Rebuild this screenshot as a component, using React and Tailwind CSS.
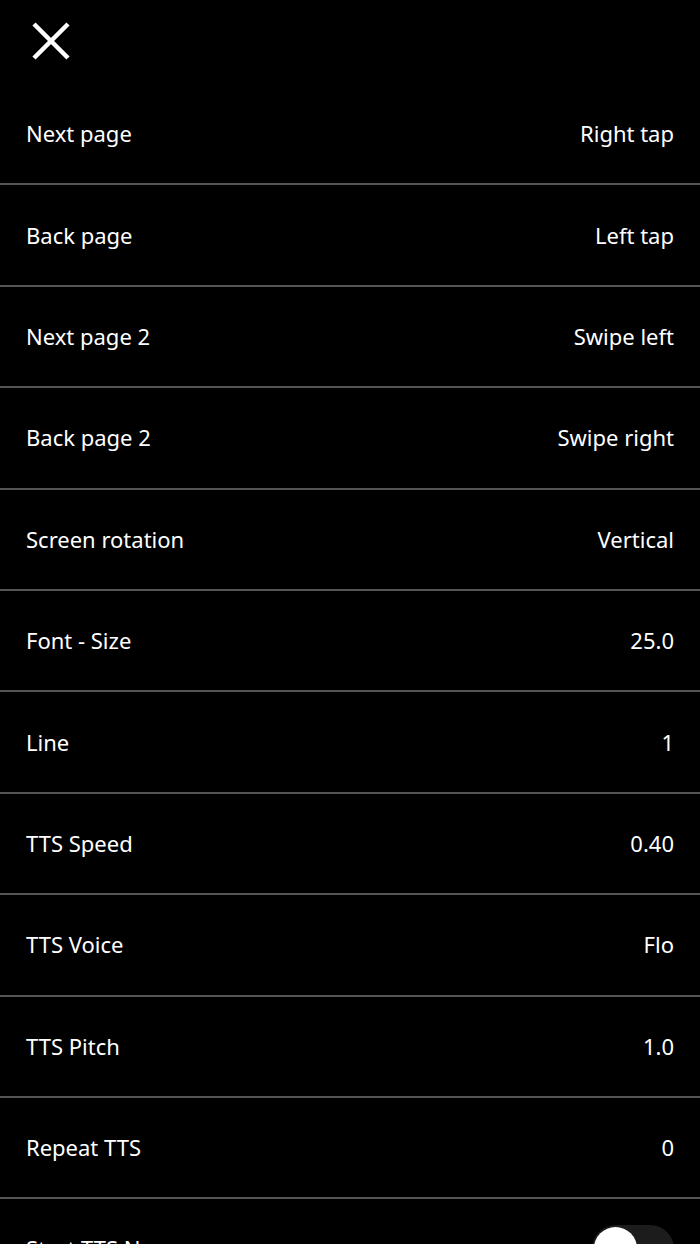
const rows = [
  ["Next page", "Right tap"],
  ["Back page", "Left tap"],
  ["Next page 2", "Swipe left"],
  ["Back page 2", "Swipe right"],
  ["Screen rotation", "Vertical"],
  ["Font - Size", "25.0"],
  ["Line", "1"],
  ["TTS Speed", "0.40"],
  ["TTS Voice", "Flo"],
  ["TTS Pitch", "1.0"],
  ["Repeat TTS", "0"],
];

export default function App() {
  return (
    <div
      className="w-[700px] h-[1244px] overflow-hidden bg-black text-white"
      style={{ fontFamily: '"Noto Sans", "Noto Sans CJK KR", sans-serif' }}
    >
      {/* Header */}
      <div className="h-[84px] flex items-center pl-[30px]">
        <svg width="42" height="42" viewBox="0 0 42 42" className="-mt-[3px]">
          <path d="M4 4 L38 38 M38 4 L4 38" stroke="white" strokeWidth="4.5" />
        </svg>
      </div>

      {rows.map(([label, value]) => (
        <div key={label}>
          <div className="h-[99.4px] flex items-center justify-between px-[26px] text-[22px]">
            <span>{label}</span>
            <span>{value}</span>
          </div>
          <div className="h-[2px] bg-[#555555]" />
        </div>
      ))}

      {/* Partially visible row */}
      <div className="h-[99.4px] flex items-center justify-between px-[26px] text-[22px]">
        <span>Start TTS Now</span>
        <div className="w-[82px] h-[48px] rounded-full bg-[#1c1c1c] flex items-center px-[2px]">
          <div className="w-[43px] h-[43px] rounded-full bg-white" />
        </div>
      </div>
    </div>
  );
}
